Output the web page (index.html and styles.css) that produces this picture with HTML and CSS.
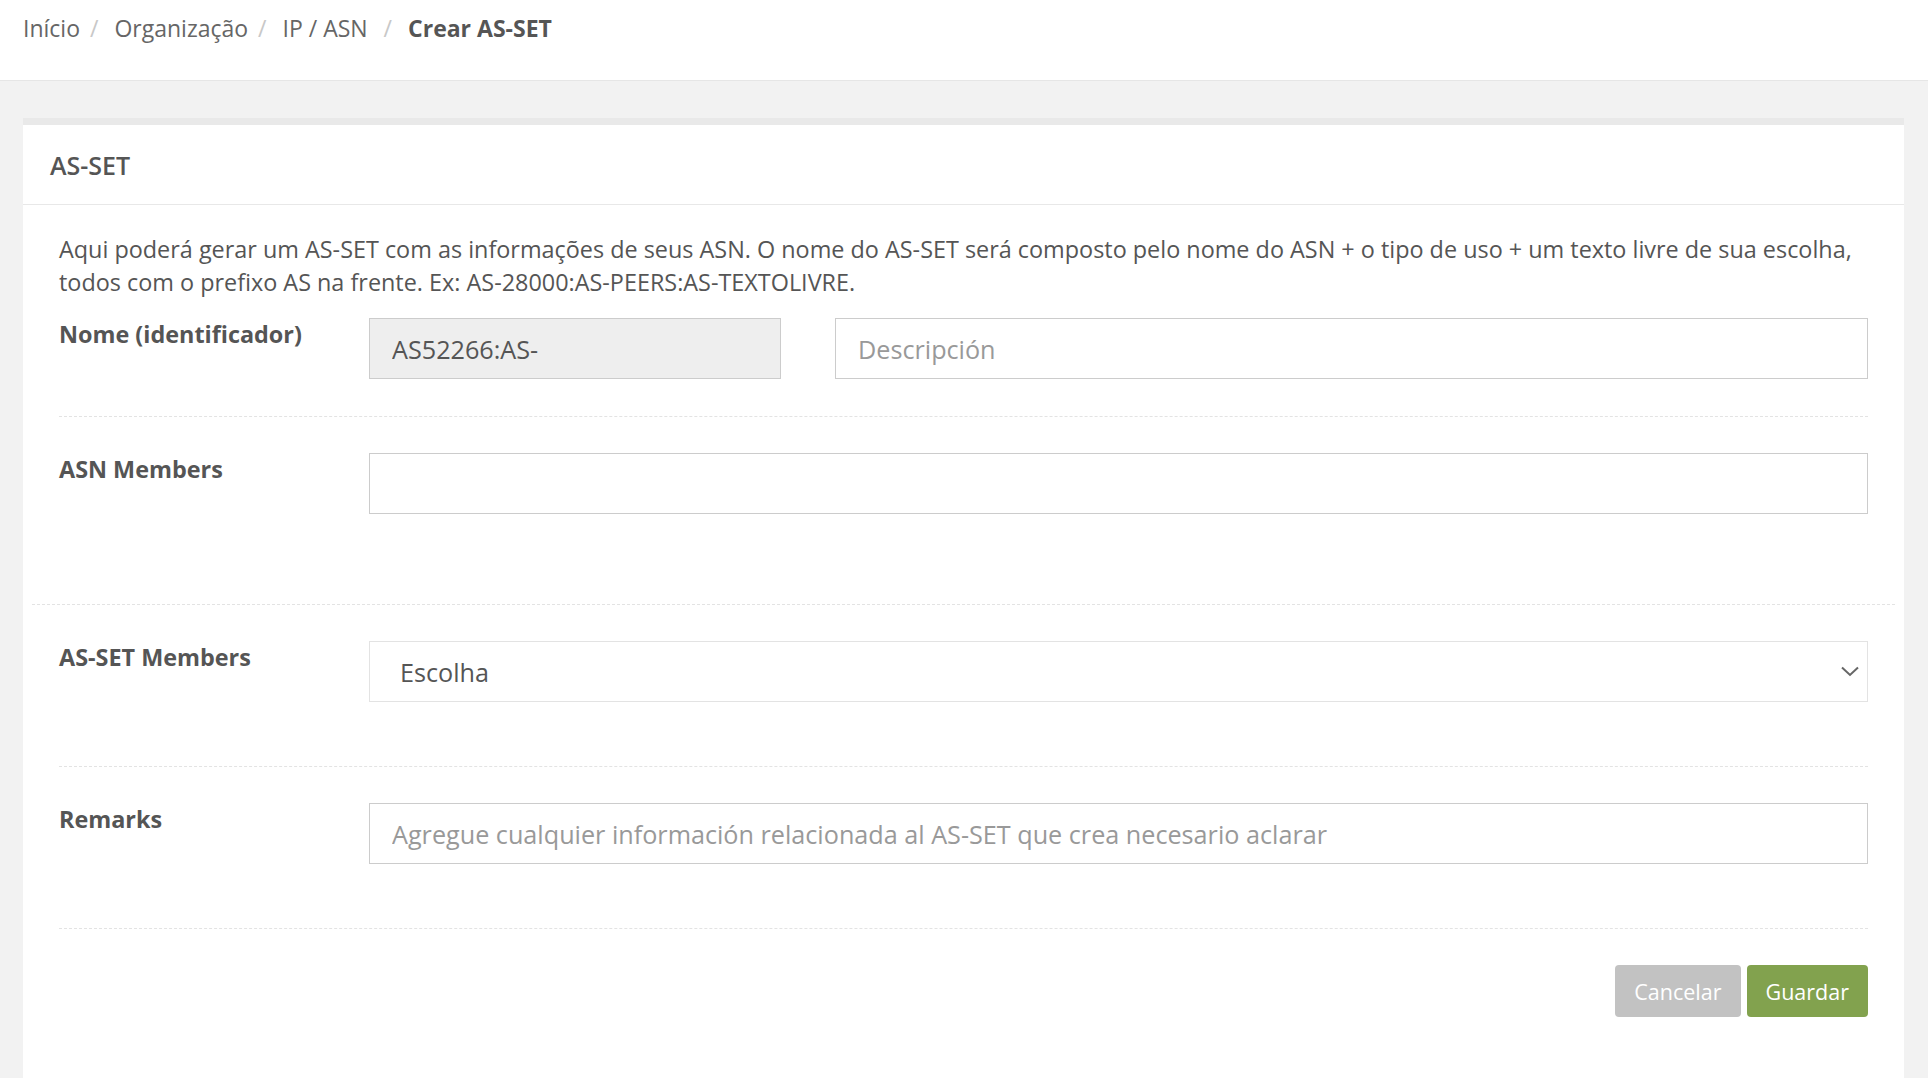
FILE: index.html
```html
<!DOCTYPE html>
<html lang="pt">
<head>
  <meta charset="UTF-8" />
  <title>Crear AS-SET</title>
  <link rel="stylesheet" href="styles.css">
</head>
<body>
  <div class="topbar">
    <nav class="breadcrumb">
      <a href="#">Início</a><span class="sep">/</span>
      <a href="#">Organização</a><span class="sep">/</span>
      <a href="#">IP / ASN&nbsp;</a><span class="sep">/</span>
      <span class="active">Crear AS-SET</span>
    </nav>
  </div>

  <div class="content">
    <div class="card">
      <div class="card-header">AS-SET</div>
      <div class="card-body">
        <p class="intro">Aqui poderá gerar um AS-SET com as informações de seus ASN. O nome do AS-SET será composto pelo nome do ASN + o tipo de uso + um texto livre de sua escolha, todos com o prefixo AS na frente. Ex: AS-28000:AS-PEERS:AS-TEXTOLIVRE.</p>

        <div class="form-row first">
          <label class="form-label">Nome (identificador)</label>
          <div class="form-field">
            <input class="input readonly" type="text" value="AS52266:AS-" readonly />
            <input class="input grow" type="text" placeholder="Descripción" />
          </div>
        </div>

        <div class="form-row wide tall">
          <label class="form-label">ASN Members</label>
          <div class="form-field">
            <input class="input grow" type="text" />
          </div>
        </div>

        <div class="form-row roomy">
          <label class="form-label">AS-SET Members</label>
          <div class="form-field">
            <div class="select">
              <span>Escolha</span>
              <svg width="18" height="11" viewBox="0 0 18 11"><path d="M1 1.5 L9 9 L17 1.5" fill="none" stroke="#666" stroke-width="2"/></svg>
            </div>
          </div>
        </div>

        <div class="form-row roomy">
          <label class="form-label">Remarks</label>
          <div class="form-field">
            <input class="input grow" type="text" placeholder="Agregue cualquier información relacionada al AS-SET que crea necesario aclarar" />
          </div>
        </div>

        <div class="actions">
          <button class="btn btn-cancel">Cancelar</button>
          <button class="btn btn-save">Guardar</button>
        </div>
      </div>
    </div>
  </div>
</body>
</html>
```

FILE: styles.css
```css
/* Base */
html, body {
  margin: 0;
  height: 100%;
  overflow: hidden;
}
body {
  background: #f2f2f2;
  font-family: "Open Sans", "Liberation Sans", sans-serif;
  color: #555;
}

/* Top bar with breadcrumb */
.topbar {
  background: #fff;
  height: 68px;
  border-bottom: 1px solid #e6e6e6;
  padding: 12px 23px 0;
}
.breadcrumb {
  font-size: 23px;
  line-height: 32px;
  color: #666;
}
.breadcrumb a {
  color: #666;
  text-decoration: none;
}
.breadcrumb .sep {
  color: #c8c8c8;
  margin: 0 10px;
}
.breadcrumb .active {
  font-weight: 700;
  color: #555;
}

/* Card */
.content {
  padding: 37px 24px 0 23px;
}
.card {
  background: #fff;
  border-top: 7px solid #e9e9e9;
  min-height: 1000px;
}
.card-header {
  height: 80px;
  box-sizing: border-box;
  display: flex;
  align-items: center;
  padding: 0 27px;
  border-bottom: 1px solid #e8e8e8;
  font-size: 25px;
  font-weight: 600;
  color: #555;
}
.card-body {
  padding: 28px 36px;
}
.intro {
  margin: 0 0 19px;
  font-size: 23.4px;
  line-height: 33px;
  color: #555;
}

/* Form rows */
.form-row {
  display: flex;
  align-items: flex-start;
  padding: 36px 0 37px;
  border-bottom: 1px dashed #e3e3e3;
}
.form-row.first { padding-top: 0; }
.form-row.tall { padding-bottom: 90px; }
.form-row.roomy { padding-bottom: 64px; }
.form-row.wide {
  margin: 0 -27px;
  padding-left: 27px;
  padding-right: 27px;
}
.form-label {
  width: 310px;
  flex: none;
  font-size: 23.4px;
  font-weight: 700;
  line-height: 33px;
  color: #555;
}
.form-field {
  flex: 1;
  display: flex;
  gap: 54px;
}

.input {
  height: 61px;
  box-sizing: border-box;
  border: 1px solid #ccc;
  padding: 0 22px;
  font-family: inherit;
  font-size: 25.2px;
  color: #555;
  background: #fff;
  outline: none;
  border-radius: 0;
}
.input::placeholder { color: #999; }
.input.readonly {
  width: 412px;
  background: #eee;
}
.input.grow { flex: 1; min-width: 0; }

.select {
  flex: 1;
  height: 61px;
  box-sizing: border-box;
  border: 1px solid #e3e3e3;
  display: flex;
  align-items: center;
  justify-content: space-between;
  padding: 0 8px 0 30px;
  font-size: 25.2px;
  color: #555;
}

/* Buttons */
.actions {
  display: flex;
  justify-content: flex-end;
  gap: 6px;
  padding-top: 36px;
}
.btn {
  height: 52px;
  padding: 0 19px;
  border: none;
  border-radius: 4px;
  font-family: inherit;
  font-size: 21.5px;
  color: #fff;
  cursor: pointer;
}
.btn-cancel { background: #c2c2c2; }
.btn-save { background: #82a24e; }
```
